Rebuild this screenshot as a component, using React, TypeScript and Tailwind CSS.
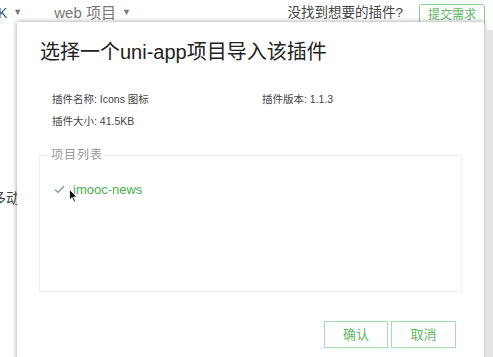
import React from "react";

const font = { fontFamily: '"Liberation Sans", "Noto Sans CJK SC", sans-serif' };

export default function App() {
  return (
    <div className="relative w-[493px] h-[357px] overflow-hidden bg-white text-[#333]" style={font}>
      {/* background page top bar */}
      <div className="flex items-center h-[26px] text-[14px] text-[#555]">
        <div className="ml-[-2px] flex items-center gap-[6px]">
          <span>K</span>
          <span className="text-[9px] text-[#777]">▼</span>
        </div>
        <div className="ml-[32px] flex items-center gap-[6px] text-[#777]">
          <span className="text-[15px]">web 项目</span>
          <span className="text-[9px]">▼</span>
        </div>
        <div className="ml-auto text-[13.5px] text-[#444]">没找到想要的插件?</div>
        <div className="ml-[16px] mr-[8px] mt-[4px] h-[22px] px-[8px] flex items-center border border-[#8fcf97] rounded-[3px] text-[12px] text-[#62b866]">
          提交需求
        </div>
      </div>
      <div className="mt-[162px] text-[14px] text-[#444] ml-[-8px]">多动</div>

      {/* dialog */}
      <div className="absolute left-[17px] top-[22px] w-[467px] h-[360px] bg-white shadow-[0_0_5px_rgba(0,0,0,0.4)] flex flex-col">
        <div className="pl-[23px] pt-[18px] text-[20px] leading-[24px] text-[#222]">选择一个uni-app项目导入该插件</div>
        <div className="pl-[35px] pt-[29px] grid grid-cols-[210px_1fr] gap-y-[9px] text-[10.5px] leading-[13px] text-[#444]">
          <span>插件名称: Icons 图标</span>
          <span>插件版本: 1.1.3</span>
          <span>插件大小: 41.5KB</span>
        </div>
        <fieldset className="ml-[22px] mr-[22px] mt-[18px] h-[146px] border border-[#eeeeee] px-[10px] min-w-0">
          <legend className="px-[1px] text-[12px] text-[#999] tracking-[1px]">项目列表</legend>
          <div className="flex items-center gap-[8px] pt-[16px] pl-[4px]">
            <svg width="11" height="9" viewBox="0 0 11 9" fill="none">
              <path d="M1 4.5 L4 7.5 L10 1" stroke="#7aa88a" strokeWidth="1.3" />
            </svg>
            <span className="text-[13px] text-[#4cb050]">imooc-news</span>
          </div>
        </fieldset>
        <div className="flex justify-end gap-[3px] mr-[28px] mt-[29px]">
          <div className="w-[64px] h-[27px] flex items-center justify-center border border-[#a8dcae] text-[13px] text-[#5cb860]">确认</div>
          <div className="w-[65px] h-[27px] flex items-center justify-center border border-[#a8dcae] text-[13px] text-[#5cb860]">取消</div>
        </div>
      </div>

      {/* right gray strip */}
      <div className="absolute right-0 top-[30px] w-[7px] h-[327px] bg-[#e4e4e4]" />

      {/* mouse cursor */}
      <svg className="absolute left-[69px] top-[189px]" width="9" height="14" viewBox="0 0 9 14">
        <path d="M0.5 0.5 L0.5 11 L3 8.5 L5 13 L6.5 12.3 L4.6 8 L8 8 Z" fill="#111" stroke="#fff" strokeWidth="0.8" />
      </svg>
    </div>
  );
}
